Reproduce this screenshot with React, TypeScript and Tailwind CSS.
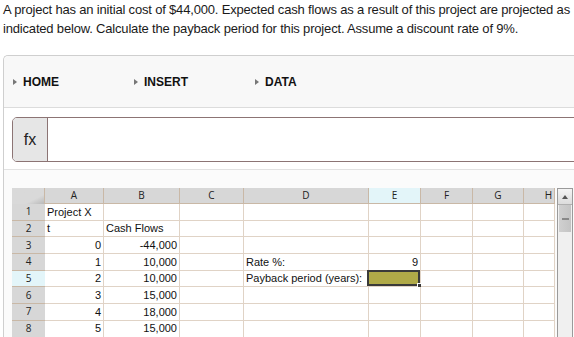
import React from "react";

const cols = [
  { label: "A", w: "w-[59px]" },
  { label: "B", w: "w-[76px]" },
  { label: "C", w: "w-[64px]" },
  { label: "D", w: "w-[125px]" },
  { label: "E", w: "w-[52px]" },
  { label: "F", w: "w-[52px]" },
  { label: "G", w: "w-[51px]" },
  { label: "H", w: "w-[31px]" },
];

type Cell = { text?: string; right?: boolean; selected?: boolean };

const rows: Cell[][] = [
  [{ text: "Project X" }],
  [{ text: "t" }, { text: "Cash Flows" }],
  [{ text: "0", right: true }, { text: "-44,000", right: true }],
  [{ text: "1", right: true }, { text: "10,000", right: true }, {}, { text: "Rate %:" }, { text: "9", right: true }],
  [{ text: "2", right: true }, { text: "10,000", right: true }, {}, { text: "Payback period (years):" }, { selected: true }],
  [{ text: "3", right: true }, { text: "15,000", right: true }],
  [{ text: "4", right: true }, { text: "18,000", right: true }],
  [{ text: "5", right: true }, { text: "15,000", right: true }],
];

const tabs = ["HOME", "INSERT", "DATA"];

const Sheet = () => {
  return (
    <div className="flex">
      <div className="flex flex-col">
        {/* column headers */}
        <div className="flex h-[16px]">
          <div className="w-[33px] bg-gradient-to-br from-[#d9d9d9] from-70% to-[#b9b9b9] border-r border-[#c9b8a6]" />
          {cols.map((c) => (
            <div
              key={c.label}
              className={`${c.w} flex items-center justify-center border-r border-b border-[#c9b8a6] text-[10px] text-[#222] ${
                c.label === "E" ? "bg-[#e3f5f9]" : "bg-[#d7d7d7]"
              } ${c.label === "H" ? "justify-end pr-[2px]" : ""}`}
            >
              {c.label}
            </div>
          ))}
        </div>
        {rows.map((row, ri) => (
          <div key={ri} className="flex h-[16.7px]">
            <div
              className={`w-[33px] flex items-center justify-center border-b border-[#c9b8a6] text-[10px] text-[#222] ${
                ri === 4 ? "bg-[#e3f5f9]" : "bg-[#d7d7d7]"
              }`}
            >
              {ri + 1}
            </div>
            {cols.map((c, ci) => {
              const cell = row[ci] || {};
              return (
                <div
                  key={c.label}
                  className={`${c.w} relative flex items-center border-r border-b border-[#e0d3c6] bg-white px-[2px] font-['Liberation_Sans',Arial,sans-serif] text-[11px] text-[#111] whitespace-nowrap ${
                    cell.right ? "justify-end" : ""
                  }`}
                >
                  {cell.text}
                  {cell.selected && (
                    <div className="absolute left-[-2px] top-[-1px] right-0 bottom-0 border-2 border-[#3a3a3a] bg-[#b0aa48]">
                      <div className="absolute right-[-4px] bottom-[-4px] w-[5px] h-[5px] bg-[#3a3a3a] border border-white" />
                    </div>
                  )}
                </div>
              );
            })}
          </div>
        ))}
      </div>
      {/* scrollbar */}
      <div className="ml-[2px] w-[16px] border border-[#9a9a9a] bg-[#f0f0f0] flex flex-col">
        <div className="h-[16px] flex items-center justify-center bg-gradient-to-b from-[#f4f4f4] to-[#dcdcdc] border-b border-[#b0b0b0]">
          <div className="w-0 h-0 border-l-[3px] border-r-[3px] border-b-[4px] border-l-transparent border-r-transparent border-b-[#555]" />
        </div>
        <div className="h-[27px] mx-[1px] bg-gradient-to-r from-[#d0d0d0] to-[#c4c4c4] flex items-center justify-center">
          <div className="w-[7px] h-[2px] bg-[#888]" />
        </div>
      </div>
    </div>
  );
};

export default function App() {
  return (
    <div className="w-[574px] h-[337px] overflow-hidden bg-white font-['Liberation_Sans',Arial,sans-serif] text-[#222]">
      <p className="w-[574px] pl-[3px] pt-0 text-[13px] leading-[19px] tracking-[-0.18px] text-[#1a1a1a]">
        A project has an initial cost of $44,000. Expected cash flows as a result of this project are projected as
        indicated below. Calculate the payback period for this project. Assume a discount rate of 9%.
      </p>
      <div className="ml-[3px] mt-[17px] w-[600px] rounded-tl-[5px] border-l border-t border-[#cfcfcf] bg-white">
        <div className="flex h-[52px] items-center rounded-tl-[5px] border-b border-[#dcdcdc] bg-[#f8f8f8] pl-[9px]">
          {tabs.map((t) => (
            <div key={t} className="flex w-[121px] items-center">
              <span className="mr-[6px] w-0 h-0 border-t-[3px] border-b-[3px] border-l-[4px] border-t-transparent border-b-transparent border-l-[#777]" />
              <span className="text-[12px] font-bold text-[#111]">{t}</span>
            </div>
          ))}
        </div>
        <div className="px-[8px] pt-[9px] pb-[7px]">
          <div className="flex h-[45px] rounded-l-[5px] border border-[#8c7474] bg-white">
            <div className="flex w-[35px] items-center justify-center rounded-l-[4px] border-r border-[#8c7474] bg-[#e6e6e6] text-[16px] text-[#222]">
              fx
            </div>
            <div className="flex-1" />
          </div>
        </div>
        <div className="border-t border-[#e2e2e2] bg-[#fbfbfb] pl-[8px] pt-[18px] font-['Open_Sans',sans-serif]">
          <Sheet />
        </div>
      </div>
    </div>
  );
}
